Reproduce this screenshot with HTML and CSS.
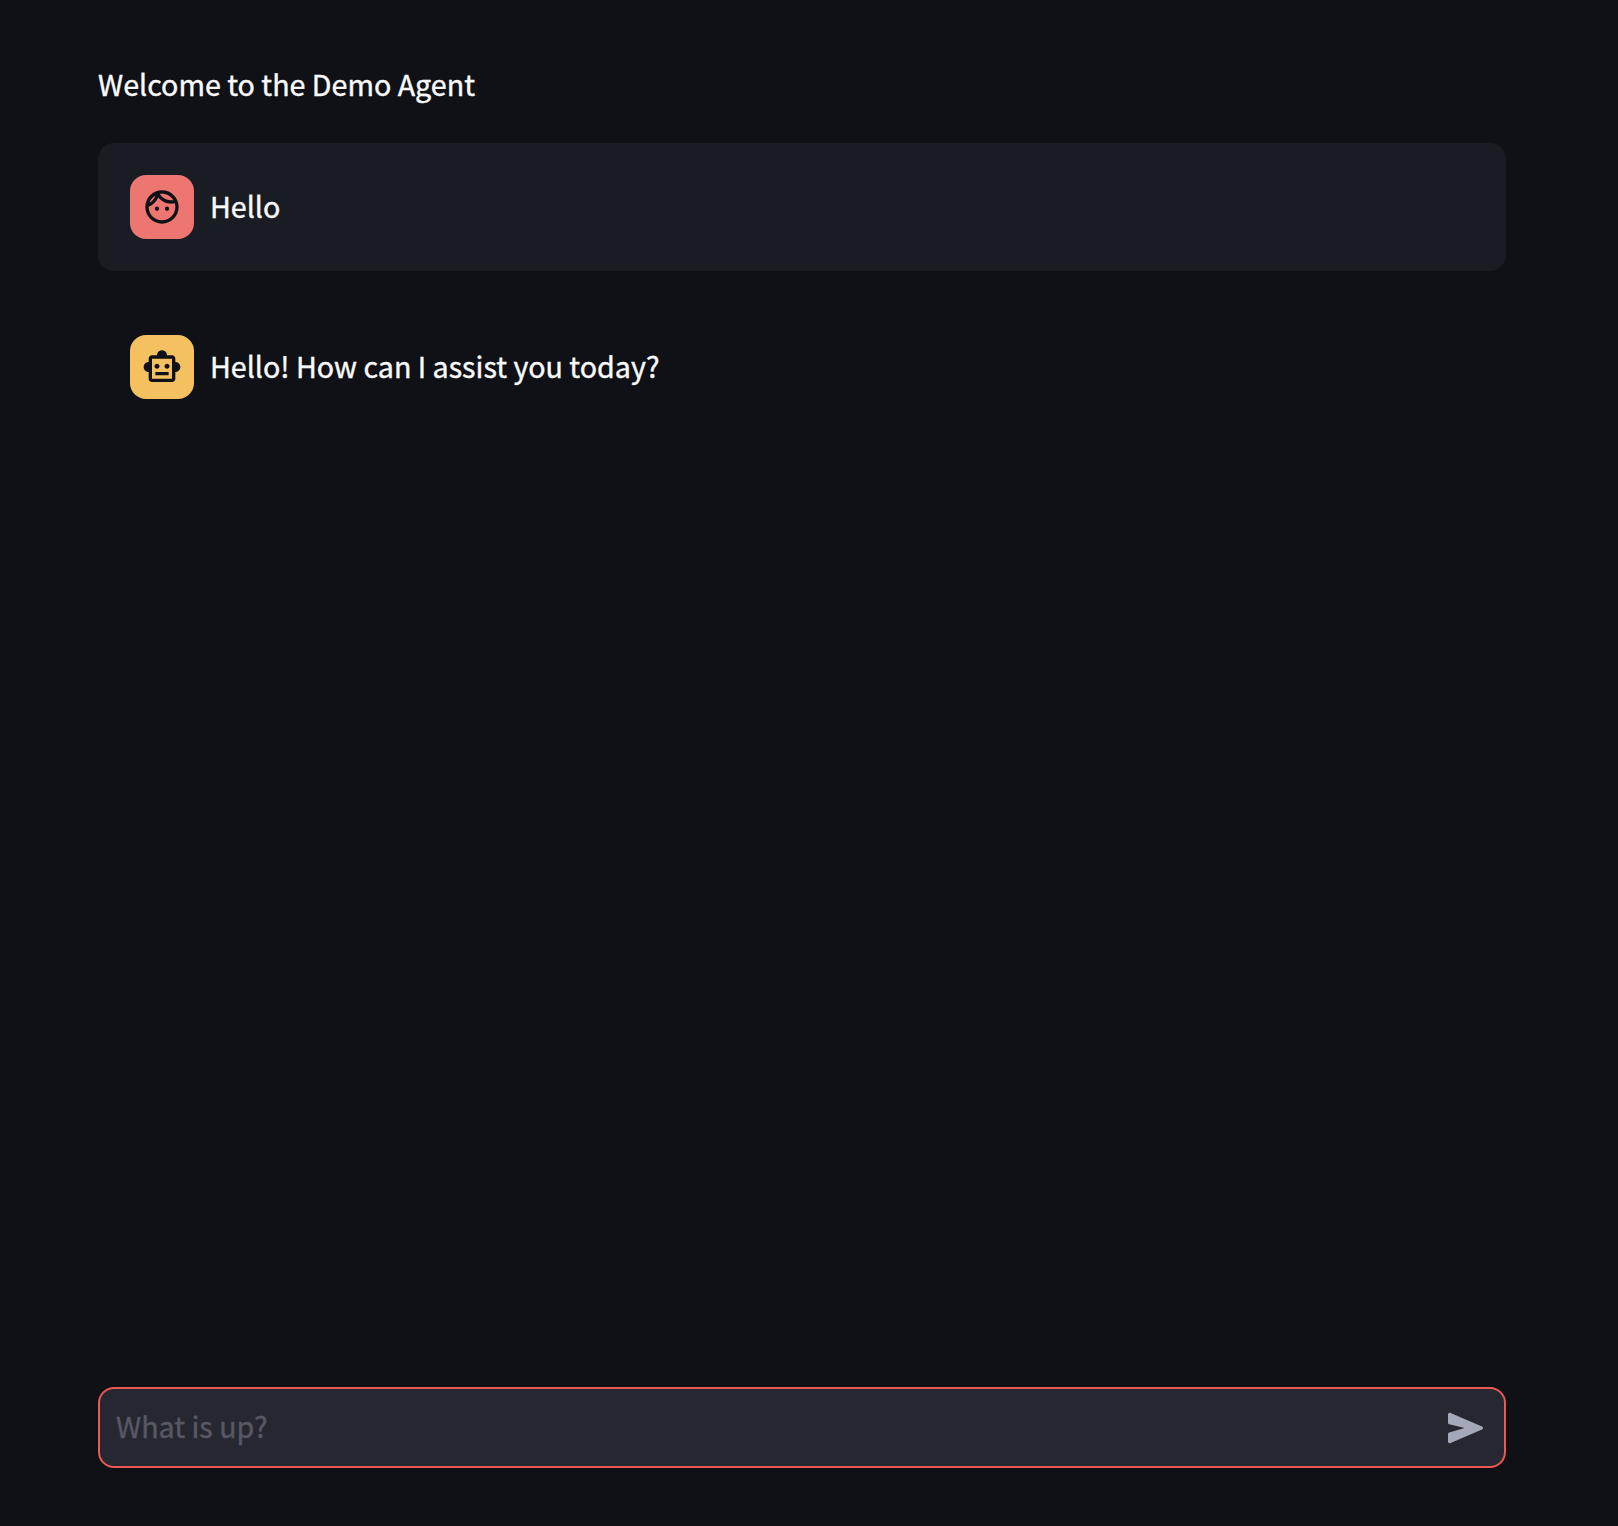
FILE: index.html
```html
<!DOCTYPE html>
<html lang="en">
<head>
<meta charset="utf-8">
<title>Demo Agent</title>
<link rel="stylesheet" href="styles.css">
</head>
<body>
<div class="app">
  <main class="chat">
    <p class="intro">Welcome to the Demo Agent</p>
    <article class="message message-user">
      <div class="avatar avatar-user">
        <svg viewBox="0 0 24 24" aria-hidden="true"><path d="M10.25 13c0 .69-.56 1.25-1.25 1.25S7.75 13.69 7.75 13s.56-1.25 1.25-1.25 1.25.56 1.25 1.25zM15 11.75c-.69 0-1.25.56-1.25 1.25s.56 1.25 1.25 1.25 1.25-.56 1.25-1.25-.56-1.25-1.25-1.25zm7 .25c0 5.52-4.48 10-10 10S2 17.52 2 12 6.48 2 12 2s10 4.48 10 10zM10.66 4.12C12.06 6.44 14.6 8 17.5 8c.46 0 .91-.05 1.34-.12C17.44 5.56 14.9 4 12 4c-.46 0-.91.05-1.34.12zM4.42 9.47c1.71-.97 3.03-2.55 3.66-4.44C6.37 6 5.05 7.58 4.42 9.47zM20 12c0-.78-.12-1.53-.33-2.24-.7.15-1.42.24-2.17.24-3.13 0-5.92-1.44-7.76-3.69C8.69 8.87 6.6 10.88 4 11.86c.01.04 0 .09 0 .14 0 4.41 3.59 8 8 8s8-3.59 8-8z"/></svg>
      </div>
      <p class="text">Hello</p>
    </article>
    <article class="message">
      <div class="avatar avatar-bot">
        <svg viewBox="0 0 24 24" aria-hidden="true"><path d="M20 9V7c0-1.1-.9-2-2-2h-3c0-1.66-1.34-3-3-3S9 3.34 9 5H6c-1.1 0-2 .9-2 2v2c-1.66 0-3 1.34-3 3s1.34 3 3 3v4c0 1.1.9 2 2 2h12c1.1 0 2-.9 2-2v-4c1.66 0 3-1.34 3-3s-1.34-3-3-3zm-2 10H6V7h12v12zm-9-6c-.83 0-1.5-.67-1.5-1.5S8.17 10 9 10s1.5.67 1.5 1.5S9.83 13 9 13zm7.5-1.5c0 .83-.67 1.5-1.5 1.5s-1.5-.67-1.5-1.5.67-1.5 1.5-1.5 1.5.67 1.5 1.5zM8 15h8v2H8v-2z"/></svg>
      </div>
      <p class="text">Hello! How can I assist you today?</p>
    </article>
  </main>
  <form class="composer">
    <input class="field" type="text" placeholder="What is up?" aria-label="Message">
    <button class="send" type="button" aria-label="Send">
      <svg viewBox="0 0 36 32" aria-hidden="true"><path d="M0 2.6C0 1.200 1.300.5 2.600 1L34 14.500c1.500.6 1.500 2.400 0 3L2.600 31C1.300 31.500 0 30.800 0 29.400V22c0-.8.5-1.400 1.300-1.600L16.500 16 1.300 12.300C.5 12.100 0 11.500 0 10.700z"/></svg>
    </button>
  </form>
</div>
</body>
</html>
```
FILE: styles.css
```css
* {
  box-sizing: border-box;
}

body {
  margin: 0;
  background: #0f1116;
  color: #fafafa;
  font-family: "Noto Sans CJK SC", "Noto Sans", sans-serif;
  font-size: 28.65px;
  line-height: 48px;
  -webkit-text-stroke: 0.4px;
}

p {
  margin: 0;
}

.app {
  display: flex;
  flex-direction: column;
  justify-content: space-between;
  height: 1526px;
  padding: 60px 112px 58px 98px;
}

.chat {
  display: flex;
  flex-direction: column;
  gap: 32px;
}

.intro {
  height: 51px;
}

.message {
  display: flex;
  align-items: center;
  gap: 16px;
  padding: 32px;
  border-radius: 16px;
}

.message-user {
  background: #1a1c24;
}

.text {
  padding-bottom: 2px;
}

.avatar {
  display: flex;
  align-items: center;
  justify-content: center;
  width: 64px;
  height: 64px;
  border-radius: 16px;
}

.avatar svg {
  width: 40px;
  height: 40px;
  fill: #0f1116;
}

.avatar-user {
  background: #ed7671;
}

.avatar-bot {
  background: #f5c05f;
}

.composer {
  display: flex;
  align-items: center;
  height: 81px;
  padding: 0 20px 0 16px;
  border: 2px solid #ec5953;
  border-radius: 16px;
  background: #262730;
}

.field {
  flex: 1;
  height: 52px;
  padding: 0 0 4px;
  border: 0;
  outline: 0;
  background: none;
  color: inherit;
  font: inherit;
  -webkit-text-stroke: inherit;
}

.field::placeholder {
  color: #585865;
  opacity: 1;
}

.send {
  display: flex;
  padding: 0;
  border: 0;
  background: none;
}

.send svg {
  width: 36px;
  height: 32px;
  fill: #a5a8b8;
}
```
